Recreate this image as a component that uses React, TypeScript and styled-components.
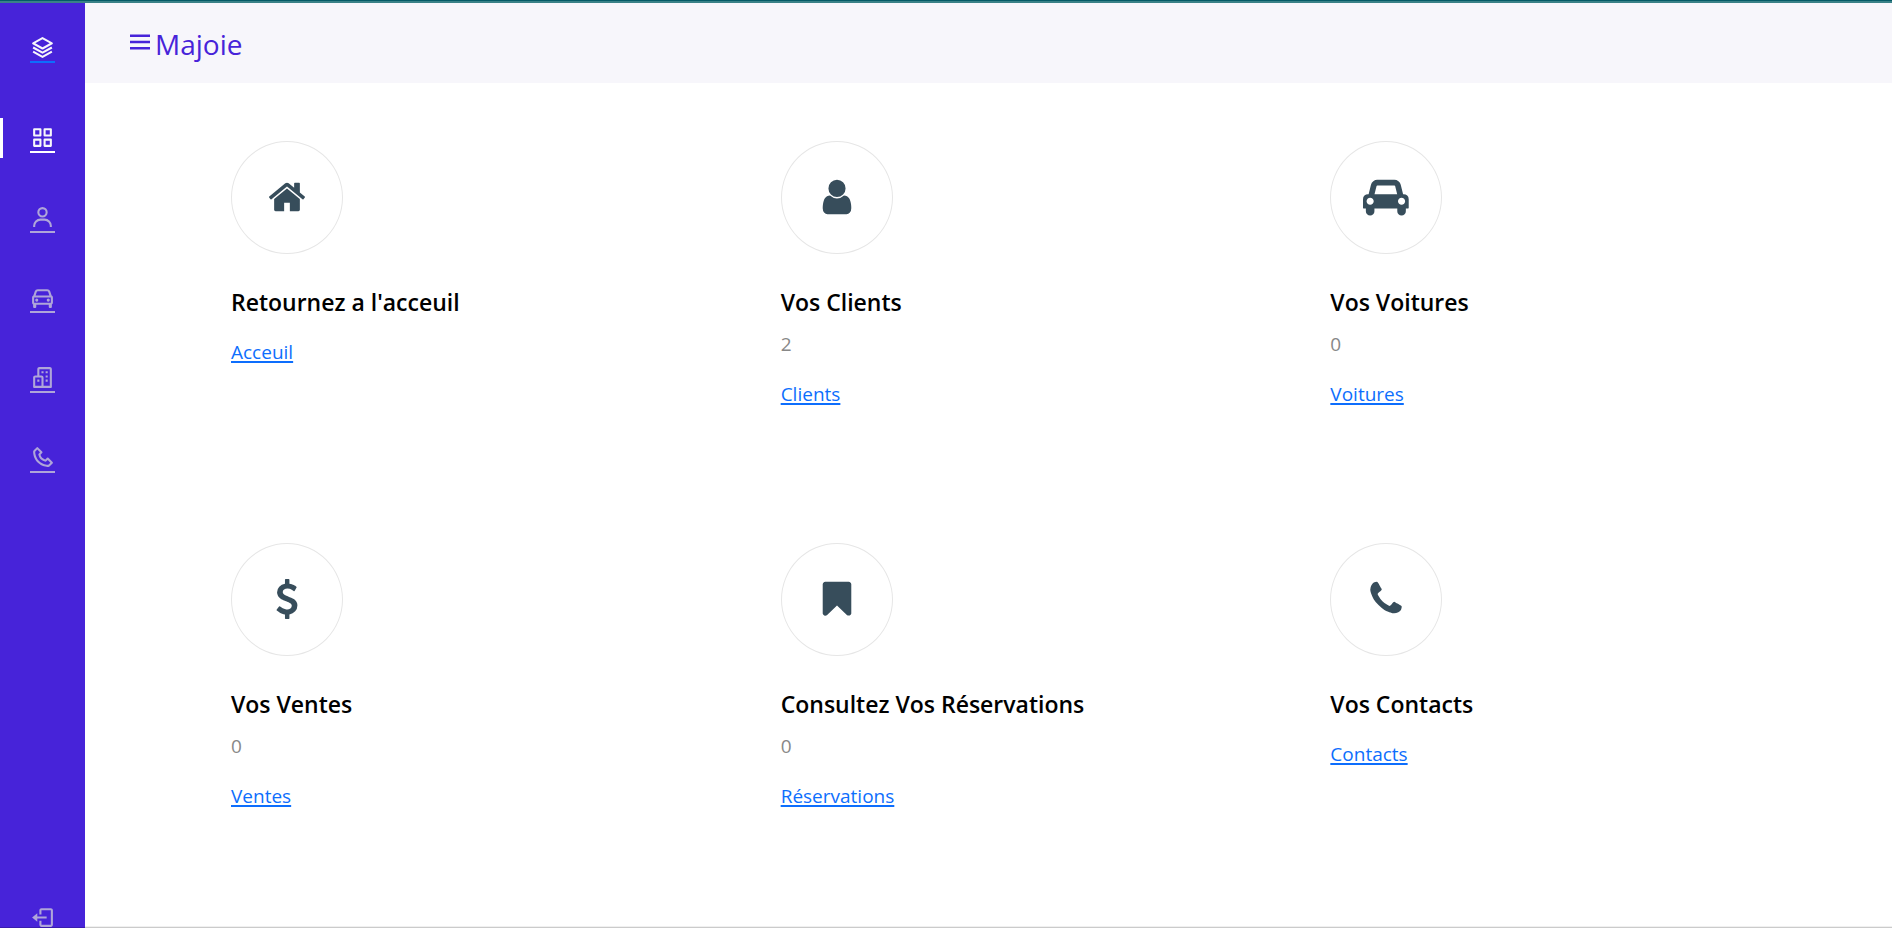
import React from 'react';
import styled, { createGlobalStyle } from 'styled-components';
import {
  BiLayer, BiGridAlt, BiUser, BiCar, BiBuildings, BiPhone, BiLogOut, BiMenu,
} from 'react-icons/bi';

const GlobalStyle = createGlobalStyle`
  *, *::before, *::after { box-sizing: border-box; }
  body {
    margin: 0;
    background: #fff;
    color: #000;
    font-family: "Segoe UI", "Open Sans", "Noto Sans", sans-serif;
    font-size: 19px;
    line-height: 30px;
  }
`;

const Shell = styled.div`
  display: grid;
  grid-template-columns: 85px 1fr;
  grid-template-rows: 3px minmax(0, 1fr);
  height: 100vh;
`;

const Strip = styled.div`
  grid-column: 1 / -1;
  background: #3a8187;
  border-top: 1px solid #045b66;
`;

const Sidebar = styled.aside`
  display: flex;
  flex-direction: column;
  align-items: flex-start;
  padding-top: 32px;
  overflow: hidden;
  background: #4723d9;
  border-bottom: 1px solid #391cae;
`;

const IconLink = styled.a<{ $color: string; $line: string }>`
  display: block;
  width: 25px;
  height: 28px;
  color: ${({ $color }) => $color};
  border-bottom: 2px solid ${({ $line }) => $line};

  svg {
    display: block;
    width: 25px;
    height: 25px;
  }
`;

const Brand = styled.div`
  flex: none;
  margin: 0 30px 55px;
`;

const Nav = styled.nav`
  display: flex;
  flex-direction: column;
  gap: 40px;
  flex: none;
`;

const NavItem = styled.div<{ $active?: boolean }>`
  flex: none;
  height: 40px;
  padding: 7px 27px 0;
  border-left: 3px solid ${({ $active }) => ($active ? '#fff' : 'transparent')};
`;

const SignOut = styled.div`
  flex: none;
  margin-top: auto;
  margin-bottom: -11px;
`;

const Page = styled.div`
  min-width: 0;
  overflow: auto;
  border-bottom: 1px solid #cbcbcb;
  box-shadow: inset 0 -1px #f0f0f0;
`;

const Header = styled.header`
  display: flex;
  align-items: flex-start;
  height: 80px;
  padding: 24px 40px;
  background: #f7f6fb;
  color: #4723d9;
`;

const MenuButton = styled.button`
  width: 30px;
  height: 30px;
  padding: 0;
  border: 0;
  background: none;
  color: inherit;
  cursor: pointer;

  svg {
    display: block;
    width: 30px;
    height: 30px;
  }
`;

const SiteName = styled.span`
  font-size: 28px;
  line-height: 34px;
  font-weight: 400;
`;

const Cards = styled.main`
  display: grid;
  grid-template-columns: repeat(3, 1fr);
  padding: 58px 12px 0 146px;
`;

const Card = styled.section`
  min-height: 402px;
`;

const Disc = styled.div`
  display: grid;
  place-items: center;
  width: 112px;
  height: 113px;
  margin-bottom: 32px;
  padding-bottom: 2px;
  border: 1px solid #e6e6e6;
  border-radius: 50%;
  color: #374d5b;

  svg {
    display: block;
    height: 40px;
    fill: currentColor;
    fill-rule: evenodd;
  }
`;

const Title = styled.h2`
  margin: 0 0 19px;
  font-size: 23px;
  line-height: 32px;
  font-weight: 600;
`;

const Count = styled.p`
  margin: -8px 0 20px;
  color: #888;
`;

const CardLink = styled.a`
  display: inline-block;
  color: #0d6efd;
  text-decoration: underline 2px;
  text-underline-offset: 2px;
`;

const glyphs = {
  home: 'M1472 992v480q0 26-19 45t-45 19h-384v-384h-256v384h-384q-26 0-45-19t-19-45v-480q0-1 .5-3t.5-3l575-474 575 474q1 2 1 6zm223-69l-62 74q-8 9-21 11h-3q-13 0-21-7l-692-577-692 577q-12 8-24 7-13-2-21-11l-62-74q-8-10-7-23.5t11-21.5l719-599q32-26 76-26t76 26l244 204v-195q0-14 9-23t23-9h192q14 0 23 9t9 23v408l219 182q10 8 11 21.5t-7 23.5z',
  user: 'M1536 1399q0 109-62.5 187t-150.5 78h-854q-88 0-150.5-78t-62.5-187q0-85 8.5-160.5t31.5-152 58.5-131 94-89 134.5-34.5q131 128 313 128t313-128q76 0 134.5 34.5t94 89 58.5 131 31.5 152 8.5 160.5zm-256-887q0 159-112.5 271.5t-271.5 112.5-271.5-112.5-112.5-271.5 112.5-271.5 271.5-112.5 271.5 112.5 112.5 271.5z',
  car: 'M480 1088q0 66-47 113t-113 47-113-47-47-113 47-113 113-47 113 47 47 113zm36-320h1016l-89-357q-2-8-14-17.5t-21-9.5h-768q-9 0-21 9.5t-14 17.5zm1372 320q0 66-47 113t-113 47-113-47-47-113 47-113 113-47 113 47 47 113zm160-96v384q0 14-9 23t-23 9h-96v128q0 80-56 136t-136 56-136-56-56-136v-128h-1024v128q0 80-56 136t-136 56-136-56-56-136v-128h-96q-14 0-23-9t-9-23v-384q0-93 65.5-158.5t158.5-65.5h28l105-419q23-94 104-157.5t179-63.5h768q98 0 179 63.5t104 157.5l105 419h28q93 0 158.5 65.5t65.5 158.5z',
  dollar: 'M1362 1185q0 153-99.5 263.5t-258.5 136.5v175q0 14-9 23t-23 9h-135q-13 0-22.5-9.5t-9.5-22.5v-175q-66-9-127.5-31t-101.5-44.5-74-48-46.5-37.5-17.5-18q-17-21-2-41l103-135q7-10 23-12 15-2 24 9l2 2q113 99 243 125 37 8 74 8 81 0 142.5-43t61.5-122q0-28-15-53t-33.5-42-58.5-37.5-66-32-80-32.5q-39-16-61.5-25t-61.5-26.5-62.5-31-56.5-35.5-53.5-42.5-43.5-49-35.5-58-21-66.5-8.5-78q0-138 98-242t255-134v-180q0-13 9.5-22.5t22.5-9.5h135q14 0 23 9t9 23v176q57 6 110.5 23t87 33.5 63.5 37.5 39 29 15 14q17 18 5 38l-81 146q-8 15-23 16-14 3-27-7-3-3-14.5-12t-39-26.5-58.5-32-74.5-26-85.5-11.5q-95 0-155 43t-60 111q0 26 8.5 48t29.5 41.5 39.5 33 56 31 60.5 27 70 27.5q53 20 81 31.5t76 35 75.5 42.5 62 50 53 63.5 31.5 76.5 13 94z',
  bookmark: 'M1420 128q23 0 44 9 33 13 52.5 41t19.5 62v1289q0 34-19.5 62t-52.5 41q-19 8-44 8-48 0-83-32l-441-424-441 424q-36 33-83 33-23 0-44-9-33-13-52.5-41t-19.5-62v-1289q0-34 19.5-62t52.5-41q21-9 44-9h1048z',
  phone: 'M1600 1240q0 27-10 70.5t-21 68.5q-21 50-122 106-94 51-186 51-27 0-53-3.5t-57.5-12.5-47-14.5-55.5-20.5-49-18q-98-35-175-83-127-79-264-216t-216-264q-48-77-83-175-3-9-18-49t-20.5-55.5-14.5-47-12.5-57.5-3.5-53q0-92 51-186 56-101 106-122 25-11 68.5-21t70.5-10q14 0 21 3 18 6 53 76 11 19 30 54t35 63.5 31 53.5q3 4 17.5 25t21.5 35.5 7 28.5q0 20-28.5 50t-62 55-62 53-28.5 46q0 9 5 22.5t8.5 20.5 14 24 11.5 19q76 137 174 235t235 174q2 1 19 11.5t24 14 20.5 8.5 22.5 5q18 0 46-28.5t53-62 55-62 50-28.5q14 0 28.5 7t35.5 21.5 25 17.5q25 15 53.5 31t63.5 35 54 30q70 35 76 53 3 7 3 21z',
};

type GlyphName = keyof typeof glyphs;

const Glyph = ({ name }: { name: GlyphName }) => (
  <svg viewBox={name === 'car' ? '0 0 2048 1792' : '0 0 1792 1792'} aria-hidden="true">
    <path d={glyphs[name]} />
  </svg>
);

const cards: { icon: GlyphName; title: string; count?: number; link: string }[] = [
  { icon: 'home', title: "Retournez a l'acceuil", link: 'Acceuil' },
  { icon: 'user', title: 'Vos Clients', count: 2, link: 'Clients' },
  { icon: 'car', title: 'Vos Voitures', count: 0, link: 'Voitures' },
  { icon: 'dollar', title: 'Vos Ventes', count: 0, link: 'Ventes' },
  { icon: 'bookmark', title: 'Consultez Vos Réservations', count: 0, link: 'Réservations' },
  { icon: 'phone', title: 'Vos Contacts', link: 'Contacts' },
];

const navItems = [
  { id: 'dashboard', Icon: BiGridAlt, active: true },
  { id: 'clients', Icon: BiUser },
  { id: 'voitures', Icon: BiCar },
  { id: 'ventes', Icon: BiBuildings },
  { id: 'contacts', Icon: BiPhone },
];

const MUTED = '#afa5d9';
const WHITE = '#f7f6fb';

export default function App() {
  return (
    <>
      <GlobalStyle />
      <Shell>
        <Strip />
        <Sidebar>
          <Brand>
            <IconLink href="#" $color={WHITE} $line="#0d6efd"><BiLayer /></IconLink>
          </Brand>
          <Nav>
            {navItems.map(({ id, Icon, active }) => (
              <NavItem key={id} $active={active}>
                <IconLink
                  href={`#${id}`}
                  $color={active ? WHITE : MUTED}
                  $line={active ? '#fff' : MUTED}
                >
                  <Icon />
                </IconLink>
              </NavItem>
            ))}
          </Nav>
          <SignOut>
            <NavItem>
              <IconLink href="#logout" $color={MUTED} $line={MUTED}><BiLogOut /></IconLink>
            </NavItem>
          </SignOut>
        </Sidebar>
        <Page>
          <Header>
            <MenuButton type="button"><BiMenu /></MenuButton>
            <SiteName>Majoie</SiteName>
          </Header>
          <Cards>
            {cards.map(({ icon, title, count, link }) => (
              <Card key={title}>
                <Disc><Glyph name={icon} /></Disc>
                <Title>{title}</Title>
                {count !== undefined && <Count>{count}</Count>}
                <CardLink href={`#${link}`}>{link}</CardLink>
              </Card>
            ))}
          </Cards>
        </Page>
      </Shell>
    </>
  );
}
